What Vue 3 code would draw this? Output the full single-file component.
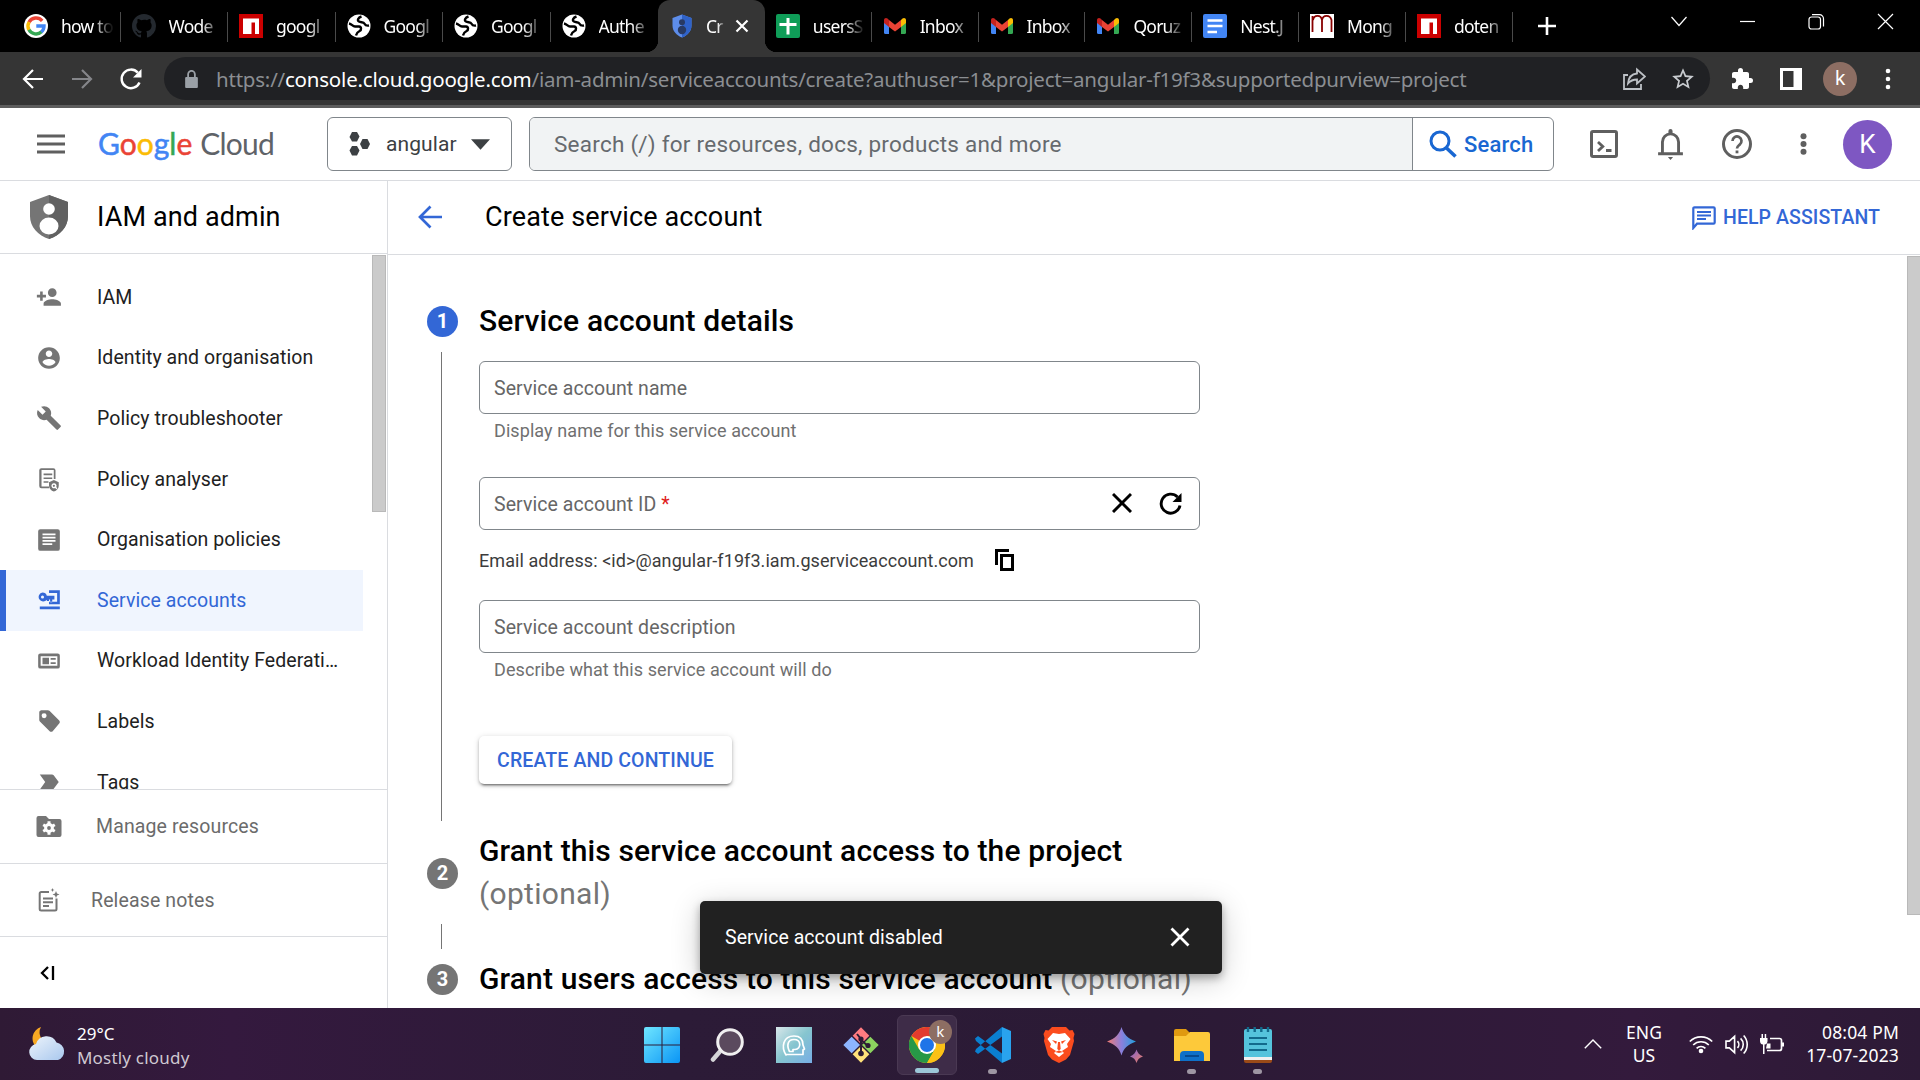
<script setup>
const tabs = [
  { icon: 'google', title: 'how to' },
  { icon: 'github', title: 'Wode' },
  { icon: 'npm', title: 'googl' },
  { icon: 'globe', title: 'Googl' },
  { icon: 'globe', title: 'Googl' },
  { icon: 'globe', title: 'Authe', last: true },
  { icon: 'shield', title: 'Cr', active: true },
  { icon: 'sheets', title: 'usersS' },
  { icon: 'gmail', title: 'Inbox' },
  { icon: 'gmail', title: 'Inbox' },
  { icon: 'gmail', title: 'Qoruz' },
  { icon: 'docs', title: 'Nest.J' },
  { icon: 'mongoose', title: 'Mong' },
  { icon: 'npm', title: 'doten' },
]

const nav = [
  { label: 'IAM', d: 'M15 12c2.21 0 4-1.79 4-4s-1.79-4-4-4-4 1.79-4 4 1.79 4 4 4zM6.200 10V7H3.800v3H.8v2.400h3v3h2.400v-3h3V10zm8.800 4c-2.67 0-8 1.34-8 4v2h16v-2c0-2.66-5.33-4-8-4z' },
  { label: 'Identity and organisation', d: 'M12 2C6.48 2 2 6.48 2 12s4.48 10 10 10 10-4.48 10-10S17.52 2 12 2zm0 3c1.66 0 3 1.34 3 3s-1.34 3-3 3-3-1.34-3-3 1.34-3 3-3zm0 14.2c-2.5 0-4.71-1.28-6-3.22.03-1.99 4-3.08 6-3.08 1.99 0 5.97 1.09 6 3.08-1.29 1.94-3.5 3.22-6 3.22z' },
  { label: 'Policy troubleshooter', d: 'M22.7 19l-9.1-9.1c.9-2.3.4-5-1.5-6.9-2-2-5-2.4-7.4-1.3L9 6 6 9 1.6 4.700C.4 7.100.9 10.100 2.900 12.100c1.900 1.900 4.600 2.400 6.900 1.500l9.100 9.100c.4.4 1 .4 1.400 0l2.300-2.300c.5-.4.5-1.100.1-1.400z' },
  { label: 'Policy analyser', d: 'M5 2h11a2 2 0 0 1 2 2v8h-1.600V3.600H5.100v15.300H12v1.600H5a2 2 0 0 1-2-2V4a2 2 0 0 1 2-2zm2 5h8v1.500H7V7zm0 3.500h8V12H7v-1.500zm0 3.500h4.500v1.500H7V14zm9.500-1l4.500 1.900v3.300c0 2.500-1.900 4.600-4.500 5.300-2.600-.7-4.500-2.800-4.500-5.300v-3.300l4.500-1.900zm0 3a2.300 2.300 0 1 0 1.200 4.300l1.100 1.100.9-.9-1-1.100a2.300 2.300 0 0 0-2.200-3.400zm0 1.300a1 1 0 1 1 0 2 1 1 0 0 1 0-2z' },
  { label: 'Organisation policies', d: 'M4 2h16a2 2 0 0 1 2 2v16a2 2 0 0 1-2 2H4a2 2 0 0 1-2-2V4a2 2 0 0 1 2-2zm2 4v1.500h12V6H6zm0 3v1.500h12V9H6zm0 3v1.500h12V12H6zm0 3v1.500h9V15H6z' },
  { label: 'Service accounts', active: true, d: 'M6 5a4.200 4.200 0 0 1 4 3h7v3.500h-2V14h-2v-2.500h-1V13h-2v-1.300A4.200 4.200 0 1 1 6 5zm0 2.900a1.400 1.400 0 1 0 0 2.800 1.400 1.400 0 0 0 0-2.800zM12 3h10v13H12v-2.500h7.500v-8H12V3zM3.500 18H22v2.600H3.500V18z' },
  { label: 'Workload Identity Federation', d: 'M4 5h16a2 2 0 0 1 2 2v10a2 2 0 0 1-2 2H4a2 2 0 0 1-2-2V7a2 2 0 0 1 2-2zm.3 2.600v8.800h15.400V7.600H4.300zM6 9h6v6H6V9zm7.500.2h4.700v1.700h-4.700V9.200zm0 3.900h4.700v1.700h-4.700v-1.700z' },
  { label: 'Labels', d: 'M21.410 11.580l-9-9C12.050 2.220 11.550 2 11 2H5c-1.100 0-2 .9-2 2v7c0 .55.22 1.050.590 1.420l9 9c.360.360.860.580 1.410.580s1.050-.22 1.410-.590l6-7c.370-.360.590-.860.590-1.410s-.23-1.060-.590-1.420zM7.500 9.500A2.300 2.300 0 1 1 7.500 4.900a2.300 2.300 0 0 1 0 4.600z' },
  { label: 'Tags', d: 'M3.500 19h11.200c.65 0 1.260-.31 1.630-.84L21 12l-4.670-6.160A2 2 0 0 0 14.700 5H3.500l5 7-5 7z' },
]
</script>

<template>
  <div class="screen">
    <!-- Browser tab strip -->
    <div class="tabstrip">
      <div v-for="(t, i) in tabs" :key="i" class="tab" :class="{ active: t.active, last: t.last, narrow: i > 5 }">
        <svg v-if="t.icon === 'google'" class="fav" viewBox="0 0 24 24">
          <circle cx="12" cy="12" r="12" fill="#fff" />
          <g fill="none" stroke-width="3.400">
            <path d="M18.200 6.800A8 8 0 0 0 5 8.200" stroke="#ea4335" />
            <path d="M5.100 8A8 8 0 0 0 5.100 16" stroke="#fbbc05" />
            <path d="M5 15.800A8 8 0 0 0 17.500 17.800" stroke="#34a853" />
            <path d="M17.300 18A8 8 0 0 0 20 12H12.300" stroke="#4285f4" />
          </g>
        </svg>
        <svg v-else-if="t.icon === 'github'" class="fav" viewBox="0 0 16 16">
          <path fill="#24292f" d="M8 0C3.580 0 0 3.580 0 8c0 3.540 2.290 6.530 5.470 7.590.4.070.55-.17.55-.38 0-.19-.01-.82-.01-1.490-2.010.37-2.530-.49-2.690-.94-.09-.23-.48-.94-.82-1.130-.28-.15-.68-.52-.01-.53.63-.01 1.080.58 1.230.82.72 1.210 1.870.87 2.330.66.070-.52.28-.87.510-1.070-1.780-.2-3.640-.89-3.640-3.950 0-.87.310-1.590.82-2.150-.08-.2-.36-1.020.080-2.120 0 0 .67-.21 2.200.82A7.600 7.600 0 0 1 8 3.860c.68 0 1.360.09 2 .27 1.530-1.040 2.200-.82 2.200-.82.440 1.100.16 1.920.080 2.120.510.560.820 1.270.820 2.150 0 3.070-1.870 3.750-3.650 3.950.290.250.540.730.540 1.480 0 1.070-.01 1.930-.01 2.200 0 .210.150.460.550.380A8 8 0 0 0 16 8c0-4.420-3.580-8-8-8z" />
        </svg>
        <svg v-else-if="t.icon === 'npm'" class="fav" viewBox="0 0 24 24">
          <path fill="#cb0000" d="M0 0h24v24H0z" />
          <path fill="#fff" d="M4 4.500h16v15.500h-4V8.500h-3.500V20H4z" />
        </svg>
        <svg v-else-if="t.icon === 'globe'" class="fav" viewBox="0 0 24 24">
          <circle cx="12" cy="12" r="11.500" fill="#fff" />
          <g fill="none" stroke="#000" stroke-width="2.400">
            <path d="M2 9.500c3 .5 3.500 3 6 3h4c2.600.3 2.600 3.500.6 4.500-1.800.9-3 1.500-3.600 4.500" />
            <path d="M14.500 2.500c-3.500 1.200-4.500 3.700-2.500 5 2 1.200 4.500.2 5.500 2.200.8 1.600 2 2.300 4.500 1.800" />
          </g>
        </svg>
        <svg v-else-if="t.icon === 'shield'" class="fav" viewBox="0 0 24 24">
          <path fill="#5d8dea" d="M12 .5L2.500 4v7.500c0 5.500 4 10 9.500 12 5.500-2 9.500-6.500 9.500-12V4z" />
          <path fill="#2f62c8" d="M12 .5L21.500 4v7.500c0 5.500-4 10-9.500 12z" />
          <circle cx="12" cy="8.200" r="3" fill="#283a63" />
          <circle cx="12" cy="16" r="4.200" fill="#283a63" />
        </svg>
        <svg v-else-if="t.icon === 'sheets'" class="fav" viewBox="0 0 24 24">
          <rect width="24" height="24" rx="2" fill="#0f9d58" />
          <path d="M3.500 10.500h17M12 4v16.500" stroke="#fff" stroke-width="3" />
        </svg>
        <svg v-else-if="t.icon === 'gmail'" class="fav" viewBox="0 0 24 24">
          <path fill="#4285f4" d="M1 8l5 3.500V20H2.500A1.500 1.500 0 0 1 1 18.500z" />
          <path fill="#34a853" d="M23 8l-5 3.500V20h3.500a1.500 1.500 0 0 0 1.500-1.500z" />
          <path fill="#fbbc04" d="M18 6l1.500-1.500C21 3.300 23 4.200 23 6v3l-5 4z" />
          <path fill="#ea4335" d="M6 6l6 4.800L18 6v7l-6 4.500L6 13z" />
          <path fill="#c5221f" d="M1 6c0-1.800 2-2.700 3.500-1.500L6 6v7L1 9z" />
        </svg>
        <svg v-else-if="t.icon === 'docs'" class="fav" viewBox="0 0 24 24">
          <rect width="24" height="24" rx="2" fill="#4285f4" />
          <path d="M4.500 6.500h15M4.500 12h15M4.500 18h9.500" stroke="#fff" stroke-width="2.600" />
        </svg>
        <svg v-else class="fav" viewBox="0 0 24 24">
          <path fill="#fff" d="M0 0h24v24H0z" />
          <path d="M2.500 18V2M3 6c1-5.500 8-5.500 9 0v12M12 6c1-5.500 8-5.500 9.500 0v12" fill="none" stroke="#800" stroke-width="1.800" />
        </svg>
        <span class="tab-title">{{ t.title }}</span>
        <svg v-if="t.active" class="tab-x" viewBox="0 0 14 14"><path d="M1.500 1.500l11 11M12.500 1.500l-11 11" stroke="#fff" stroke-width="2.200" /></svg>
      </div>
      <svg class="plus" viewBox="0 0 18 18"><path d="M9 0v18M0 9h18" stroke="#fff" stroke-width="2.600" /></svg>
      <div class="winctl">
        <svg width="18" height="18" viewBox="0 0 18 18"><path d="M1.500 4L9 12.500 16.500 4" /></svg>
        <svg width="18" height="18" viewBox="0 0 18 18"><path d="M1 8.500h15" /></svg>
        <svg width="18" height="18" viewBox="0 0 18 18"><rect x="1" y="4" width="11.500" height="12" rx="2.500" /><path d="M4 1.700h7.500a4 4 0 0 1 4 4V13.500" /></svg>
        <svg width="18" height="18" viewBox="0 0 18 18"><path d="M1 1l15 15M16 1L1 16" /></svg>
      </div>
    </div>

    <!-- Browser toolbar -->
    <div class="toolbar">
      <svg class="tb back" viewBox="0 0 24 24"><path d="M22 12H3.500M12 3l-9 9 9 9" stroke="#fff" /></svg>
      <svg class="tb fwd" viewBox="0 0 24 24"><path d="M2 12h18.500M12 3l9 9-9 9" stroke="#85868a" /></svg>
      <svg class="tb reload" viewBox="0 0 24 24"><path d="M20.500 15.500A9.300 9.300 0 1 1 18.800 5.600" stroke="#fff" stroke-width="2.400" /><path d="M22.500 2v8.500H14z" fill="#fff" stroke="none" /></svg>
      <div class="omnibox">
        <svg class="lock" viewBox="0 0 12 17"><path d="M1 6.500h10a1 1 0 0 1 1 1V16a1 1 0 0 1-1 1H1a1 1 0 0 1-1-1V7.500a1 1 0 0 1 1-1z" fill="#9aa0a6" /><path d="M2.800 7V4a3.200 3.200 0 0 1 6.400 0v3" fill="none" stroke="#9aa0a6" stroke-width="1.700" /></svg>
        <span class="url">https://<b>console.cloud.google.com</b>/iam-admin/serviceaccounts/create?authuser=1&amp;project=angular-f19f3&amp;supportedpurview=project</span>
        <svg class="share" viewBox="0 0 24 24" fill="none" stroke="#bdc1c6" stroke-width="1.800"><path d="M6 8H2v14h17v-5" /><path d="M15 2.500l8 7-8 7v-4c-4 0-6.500 1-9 4 .5-5.500 3.500-9.500 9-10z" /></svg>
        <svg class="star" viewBox="0 0 24 24"><path fill="#c9ccd0" d="M22 9.240l-7.190-.62L12 2 9.190 8.630 2 9.240l5.460 4.730L5.820 21 12 17.270 18.180 21l-1.630-7.030L22 9.240zM12 15.400l-3.760 2.270 1-4.280-3.320-2.880 4.380-.38L12 6.100l1.710 4.040 4.380.380-3.320 2.880 1 4.280L12 15.400z" /></svg>
      </div>
      <svg class="puzzle" viewBox="0 0 24 24"><path fill="#fff" d="M20.500 11H19V7c0-1.100-.9-2-2-2h-4V3.500a2.500 2.500 0 0 0-5 0V5H4c-1.100 0-1.990.9-1.990 2v3.800H3.500c1.490 0 2.700 1.210 2.700 2.700s-1.210 2.700-2.700 2.700H2V20c0 1.100.9 2 2 2h3.800v-1.500c0-1.490 1.210-2.700 2.700-2.700s2.700 1.210 2.700 2.700V22H17c1.100 0 2-.9 2-2v-4h1.500a2.500 2.500 0 0 0 0-5z" /></svg>
      <svg class="panel" viewBox="0 0 22 22"><path fill="#fff" fill-rule="evenodd" d="M0 0h22v22H0zM3 3v16h10.500V3z" /></svg>
      <div class="profile">k</div>
      <svg class="kebab" viewBox="0 0 6 22"><g fill="#fff"><circle cx="3" cy="3" r="2.300" /><circle cx="3" cy="11" r="2.300" /><circle cx="3" cy="19" r="2.300" /></g></svg>
    </div>

    <!-- Console header -->
    <header class="gc-head">
      <svg class="burger" viewBox="0 0 28 20"><path d="M0 2h28M0 10h28M0 18h28" stroke="#5f5f5f" stroke-width="2.800" /></svg>
      <div class="logo"><i class="b">G</i><i class="r">o</i><i class="y">o</i><i class="b">g</i><i class="g">l</i><i class="r">e</i><span>Cloud</span></div>
      <div class="project">
        <svg width="22" height="24" viewBox="0 0 22 24" fill="#3c4043"><path d="M3 0h5l2.500 4.500L8 9.500H3L.5 5z" /><path d="M3 14h5l2.500 4.500L8 23.500H3L.5 18.500z" /><path d="M13.500 7h5l2.500 5-2.500 5h-5L11 12z" /></svg>
        <span>angular</span>
        <svg width="19" height="11" viewBox="0 0 20 11"><path d="M0 0h20L10 11z" fill="#3c4043" /></svg>
      </div>
      <div class="search">
        <div class="search-input">Search (/) for resources, docs, products and more</div>
        <div class="search-btn">
          <svg width="28" height="28" viewBox="0 0 28 28" fill="none" stroke="#1967d2"><circle cx="11" cy="11" r="9" stroke-width="3" /><path d="M17 17.500l9.500 9" stroke-width="3.600" /></svg>
          <span>Search</span>
        </div>
      </div>
      <svg class="h-shell" viewBox="0 0 28 28" fill="none" stroke="#5f5f5f"><rect x="1.500" y="1.500" width="25" height="25" rx="1.500" stroke-width="3" /><path d="M8 12l4.800 4.500L8 21M16 20.500h5.500" stroke-width="2.800" /></svg>
      <svg class="h-bell" viewBox="0 0 24 30"><path fill="none" stroke="#5f5f5f" stroke-width="2.800" d="M4.200 24V12.500a7.800 7.800 0 0 1 15.600 0V24" /><path fill="#5f5f5f" d="M0 22.500h24v3H0zM9.500 27h5l-2.500 3zM10 4V2a2 2 0 0 1 4 0v2z" /></svg>
      <svg class="h-help" viewBox="0 0 30 30"><circle cx="15" cy="15" r="13.500" fill="none" stroke="#5f5f5f" stroke-width="3" /><path d="M10.500 12a4.500 4.500 0 1 1 7.200 3.600C16 17 15 17.600 15 19.500" fill="none" stroke="#5f5f5f" stroke-width="2.700" /><path d="M13.600 21.500h2.800v2.800h-2.800z" fill="#5f5f5f" /></svg>
      <svg class="h-dots" viewBox="0 0 6 22"><g fill="#5f5f5f"><circle cx="3" cy="3.200" r="3" /><circle cx="3" cy="11" r="3" /><circle cx="3" cy="18.800" r="3" /></g></svg>
      <div class="avatar">K</div>
    </header>

    <div class="body">
      <aside class="side">
        <div class="side-head">
          <svg width="38" height="44" viewBox="0 0 38 44"><path fill="#757575" d="M19 0L0 7v14c0 11 8 19.500 19 23 11-3.500 19-12 19-23V7z" /><path fill="#616161" d="M19 0l19 7v14c0 11-8 19.500-19 23z" /><circle cx="19" cy="14" r="5.800" fill="#fff" /><ellipse cx="19" cy="31" rx="9.500" ry="8.500" fill="#fff" /></svg>
          <h2>IAM and admin</h2>
        </div>
        <div class="side-list">
          <nav>
            <div v-for="n in nav" :key="n.label" class="item" :class="{ on: n.active }">
              <svg class="ic" viewBox="0 0 24 24"><path fill="currentColor" fill-rule="evenodd" :d="n.d" /></svg>
              <span>{{ n.label }}</span>
            </div>
          </nav>
          <div class="side-thumb"></div>
        </div>
        <div class="foot manage">
          <svg width="26" height="24" viewBox="0 0 26 24"><path fill="#757575" d="M2.500 1H10l3 3h10.500A2 2 0 0 1 25.500 6v14a2 2 0 0 1-2 2h-21a2 2 0 0 1-2-2V3a2 2 0 0 1 2-2z" /><circle cx="13" cy="13" r="3.400" fill="none" stroke="#fff" stroke-width="3" /><path d="M13 6.300v3M13 16.700v3M7.200 9.700l2.600 1.500M16.200 14.800l2.600 1.500M7.200 16.300l2.600-1.500M16.200 11.200l2.600-1.500" stroke="#fff" stroke-width="3" /></svg>
          <span>Manage resources</span>
        </div>
        <div class="foot release">
          <svg width="22" height="24" viewBox="0 0 22 24"><path fill="none" stroke="#757575" stroke-width="2" d="M11 4H3.200A1.500 1.500 0 0 0 1.700 5.500V21a1.500 1.500 0 0 0 1.500 1.500H17a1.500 1.500 0 0 0 1.500-1.500V10.500" /><path d="M5 10.500h10M5 14.200h10M5 18h6" stroke="#757575" stroke-width="1.900" /><path fill="#757575" d="M18 3l1 2.500 2.500 1-2.500 1-1 2.500-1-2.500-2.500-1 2.500-1zM14.500 0l.6 1.400 1.400.6-1.400.6-.6 1.400-.6-1.400-1.400-.6 1.400-.6z" /></svg>
          <span>Release notes</span>
        </div>
        <div class="foot collapse">
          <svg width="15" height="14" viewBox="0 0 15 14"><path d="M8 1L2 7l6 6M13 0v14" fill="none" stroke="#000" stroke-width="2.300" /></svg>
        </div>
      </aside>

      <main class="main">
        <div class="main-head">
          <svg width="24" height="24" viewBox="0 0 24 24" fill="none" stroke="#3367d6" stroke-width="2.700"><path d="M24 12H2.500M12.500 1.500L2 12l10.500 10.500" /></svg>
          <h1>Create service account</h1>
          <div class="assist">
            <svg width="24" height="24" viewBox="0 0 24 24"><path fill="none" stroke="#3367d6" stroke-width="2.200" d="M1.300 22V2.500A1.200 1.200 0 0 1 2.500 1.300h19a1.200 1.200 0 0 1 1.200 1.200v14a1.200 1.200 0 0 1-1.200 1.200H5z" /><path d="M5 6h14M5 9.500h14M5 13h9" stroke="#3367d6" stroke-width="1.900" /></svg>
            <span>HELP ASSISTANT</span>
          </div>
        </div>

        <div class="content">
          <div class="steps">
            <div class="rail">
              <div class="num blue">1</div>
              <div class="line l1"></div>
              <div class="num n2">2</div>
              <div class="line l2"></div>
              <div class="num n3">3</div>
            </div>
            <div class="form">
              <h3 class="t1">Service account details</h3>
              <div class="field">Service account name</div>
              <div class="hint">Display name for this service account</div>
              <div class="field f2">
                <span>Service account ID <em>*</em></span>
                <div class="acts">
                  <svg width="20" height="20" viewBox="0 0 20 20"><path d="M1 1l18 18M19 1L1 19" stroke="#000" stroke-width="2.900" /></svg>
                  <svg width="23" height="23" viewBox="0 0 23 23"><path d="M21 13.500A9.500 9.500 0 1 1 18.500 5" fill="none" stroke="#000" stroke-width="2.900" /><path d="M22.500 1v9H13.500z" /></svg>
                </div>
              </div>
              <div class="email">
                <span>Email address: &lt;id&gt;@angular-f19f3.iam.gserviceaccount.com</span>
                <svg width="19" height="22" viewBox="0 0 19 22" fill="none" stroke="#000" stroke-width="3"><path d="M1.500 16V1.500H14" /><rect x="6.500" y="6.500" width="11" height="14" /></svg>
              </div>
              <div class="field f3">Service account description</div>
              <div class="hint">Describe what this service account will do</div>
              <button class="cta">CREATE AND CONTINUE</button>
              <h3 class="t2">Grant this service account access to the project<br /><small>(optional)</small></h3>
              <h3 class="t3">Grant users access to this service account <small>(optional)</small></h3>
            </div>
          </div>
          <div class="main-thumb"></div>
        </div>

        <div class="snack">
          <span>Service account disabled</span>
          <svg width="20" height="20" viewBox="0 0 20 20"><path d="M1.500 1.500l17 17M18.500 1.500l-17 17" stroke="#fff" stroke-width="2.800" /></svg>
        </div>
      </main>
    </div>

    <!-- Windows taskbar -->
    <footer class="taskbar">
      <div class="weather">
        <svg width="40" height="38" viewBox="0 0 40 38">
          <defs><linearGradient id="cloud" x1="0" y1="0" x2="1" y2="1"><stop offset="0" stop-color="#eef4fb" /><stop offset="1" stop-color="#a9c8ee" /></linearGradient></defs>
          <path d="M13 2a12 12 0 1 0 15 15A11 11 0 0 1 13 2z" fill="#f7a823" />
          <path d="M9 35a8 8 0 0 1-1-15.900 11 11 0 0 1 20.500-1.500A9 9 0 0 1 30 35z" fill="url(#cloud)" />
        </svg>
        <div class="wtext"><div>29°C</div><div class="sub">Mostly cloudy</div></div>
      </div>

      <div class="apps">
        <div class="app">
          <svg viewBox="0 0 36 36"><defs><linearGradient id="win" x1="0" y1="0" x2="1" y2="1"><stop offset="0" stop-color="#6fe6ff" /><stop offset="1" stop-color="#0a95f5" /></linearGradient></defs><path fill="url(#win)" d="M2 0h15.500v17.500H0V2a2 2 0 0 1 2-2zM18.500 0H34a2 2 0 0 1 2 2v15.500H18.500zM0 18.500h17.500V36H2a2 2 0 0 1-2-2zM18.500 18.500H36V34a2 2 0 0 1-2 2H18.500z" /></svg>
        </div>
        <div class="app">
          <svg viewBox="0 0 36 36"><path d="M9.500 25L3 32.500" stroke="#d5d5d8" stroke-width="4.500" stroke-linecap="round" /><circle cx="20" cy="15" r="12.300" fill="#5b4a5e" stroke="#f0eff0" stroke-width="3" /></svg>
        </div>
        <div class="app">
          <svg viewBox="0 0 36 36"><defs><linearGradient id="alx" x1="0" y1="0" x2="1" y2="1"><stop offset="0" stop-color="#d9e7ea" /><stop offset=".5" stop-color="#86c5cf" /><stop offset="1" stop-color="#77aee6" /></linearGradient></defs><path d="M0 0h36v36H0z" fill="url(#alx)" /><g fill="none" stroke="#fff" stroke-width="1.700" stroke-linejoin="round"><path d="M10 28c-5-8-3-19 8-19 6 0 9 3.500 9 9l1.500 4-1.500 1v4.500H10z" /><path d="M13.500 24.500c-3-6-2-12 4.500-12 7.500 0 7.500 9.500 1 10h-2v2z" /></g></svg>
        </div>
        <div class="app">
          <svg viewBox="0 0 36 36"><g transform="rotate(45 18 18)"><path fill="#8db5ff" d="M5.500 18.700h11.800v11.800H5.500z" /><path fill="#ff7b80" d="M5.500 5.500h11.800v11.800H5.500z" /><path fill="#8cd35f" d="M18.700 5.500h11.800v11.800H18.700z" /><path fill="#ffe27a" d="M18.700 18.700h11.800v11.800H18.700z" /></g><path d="M14 7l4 5v15M18 13l7 6" stroke="#2c1c35" stroke-width="2" fill="none" /><g fill="#2c1c35"><circle cx="18" cy="12" r="2.600" /><circle cx="25" cy="18.500" r="2.600" /><circle cx="18" cy="26.500" r="2.800" /></g></svg>
        </div>
        <div class="app current">
          <svg viewBox="0 0 36 36"><circle cx="18" cy="18" r="18" fill="#fbc116" /><path fill="#e33b2e" d="M18 18L2.400 9A18 18 0 0 1 33.600 9H18z" /><path fill="#279847" d="M2.400 9A18 18 0 0 0 18 36l7.800-13.500L18 18l-7.800 4.500z" /><path fill="#fbc116" d="M33.600 9A18 18 0 0 1 18 36l7.800-13.500A9 9 0 0 0 18 9z" /><circle cx="18" cy="18" r="9" fill="#fff" /><circle cx="18" cy="18" r="7" fill="#1f74e8" /></svg>
          <div class="kbadge">k</div>
          <div class="bar"></div>
        </div>
        <div class="app">
          <svg viewBox="0 0 36 36"><path fill="#0a7fd0" d="M0 11.500l3-2.500L27 26.500V36L1 14zM0 24.500L3 27l24-17.500V0L1 22z" /><path fill="#29a3ee" d="M27 0l9 4v28l-9 4z" /></svg>
          <div class="dot"></div>
        </div>
        <div class="app">
          <svg viewBox="0 0 36 36"><path fill="#fb4c1e" d="M11 0h14l3.500 3.500L31.500 3l2 4-1 4 .5 3-4 14-4 4.500-7 3.500-7-3.500L7 28 3 14l.5-3-1-4 2-4 3 .5z" /><path fill="#fff" d="M12 6l6 1 6-1 5.500 6-3.500 5 1 3-6 4 2 2-5 4-5-4 2-2-6-4 1-3-3.500-5z" /><path fill="#fb4c1e" d="M11 13l5 1.500-1 2.500zM25 13l-5 1.500 1 2.500zM17 15h2l.7 7-1.700 1.500-1.700-1.500zM14 25l4-1.500 4 1.500-4 1z" /></svg>
        </div>
        <div class="app">
          <svg viewBox="0 0 36 36"><defs><linearGradient id="spark" x1="0" y1="0" x2="1" y2="0"><stop offset="0" stop-color="#f07a72" /><stop offset=".5" stop-color="#8b7fdc" /><stop offset="1" stop-color="#1fa0dc" /></linearGradient><linearGradient id="spark2" x1="0" y1="0" x2="1" y2="1"><stop offset="0" stop-color="#7d62d8" /><stop offset="1" stop-color="#f08060" /></linearGradient></defs><path fill="url(#spark)" d="M14.500 0c2 7 6 11.500 14.500 14.500C20.500 17.500 16.500 21.500 14.500 28.500 12.500 21.500 8.500 17.500 0 14.500 8.500 11.500 12.500 7 14.500 0z" /><path fill="url(#spark2)" d="M29.500 22.500c1 3.500 3 5.500 6.500 7-3.500 1-5.500 3-6.500 6.500-1-3.500-3-5.500-6.500-6.500 3.500-1.500 5.500-3.500 6.500-7z" /></svg>
        </div>
        <div class="app">
          <svg viewBox="0 0 36 36"><path fill="#e09a10" d="M2 2h10l4 4-3 6H0V4a2 2 0 0 1 2-2z" /><path fill="#fdc93a" d="M0 9h12l4-4h18a2 2 0 0 1 2 2v27H0z" /><path fill="#0f70c8" d="M10 24h16a4 4 0 0 1 4 4v6H6v-6a4 4 0 0 1 4-4z" /><path d="M11 29h14" stroke="#064a90" stroke-width="2" /></svg>
          <div class="dot"></div>
        </div>
        <div class="app">
          <svg viewBox="0 0 36 36"><path fill="#9a4a18" d="M4 30h28v4a2 2 0 0 1-2 2H6a2 2 0 0 1-2-2z" /><path fill="#f0f0f0" d="M4 28h28v5H4z" /><path fill="#55c3dc" d="M4 4a2 2 0 0 1 2-2h24a2 2 0 0 1 2 2v26H4z" /><path d="M9 11h18M9 17h18M9 23h18" stroke="#126a8c" stroke-width="2" /><path d="M8 0v5M14.700 0v5M21.300 0v5M28 0v5" stroke="#126a8c" stroke-width="2.400" /></svg>
          <div class="dot"></div>
        </div>
      </div>

      <div class="tray">
        <svg class="chev" viewBox="0 0 18 10"><path d="M.8 9.200L9 1l8.200 8.200" fill="none" stroke="#fff" stroke-width="1.400" /></svg>
        <div class="lang">ENG<br />US</div>
        <svg class="wifi" viewBox="0 0 24 20"><g fill="none" stroke="#fff" stroke-width="1.700"><path d="M.8 7.500a15.700 15.700 0 0 1 22.400 0M4.200 11a11 11 0 0 1 15.600 0M7.600 14.300a6.300 6.300 0 0 1 8.800 0" /></g><circle cx="12" cy="17" r="2.300" fill="#fff" /></svg>
        <svg class="vol" viewBox="0 0 24 22"><g fill="none" stroke="#fff" stroke-width="1.700"><path d="M1 7.500h3.500L10 2.500v17l-5.500-5H1zM13 7.500a5 5 0 0 1 0 7M16.300 4.500a9 9 0 0 1 0 13M19.500 1.500a14 14 0 0 1 0 19" /></g></svg>
        <svg class="bat" viewBox="0 0 24 20"><path d="M10 4.500h9.500a2 2 0 0 1 2 2v8a2 2 0 0 1-2 2H7" fill="none" stroke="#fff" stroke-width="1.700" /><path fill="#fff" d="M22 8.500h2v4h-2zM7 9.500h3.500v5H6zM0 4h7.500v3a3.700 3.700 0 0 1-3 3.600V20H3v-9.400A3.700 3.700 0 0 1 0 7zM1.500 0H3v4H1.500zM4.700 0h1.500v4H4.700z" /></svg>
        <div class="clock">08:04 PM<br />17-07-2023</div>
      </div>
    </footer>
  </div>
</template>

<style>
html, body { margin: 0; overflow: hidden; background: #fff; }
</style>

<style scoped>
* { box-sizing: border-box; }
svg { flex: none; display: block; }
.screen { width: 1920px; height: 1080px; display: flex; flex-direction: column; overflow: hidden; font-family: Roboto, sans-serif; color: #000; background: #fff; }

.tabstrip { height: 52px; flex: none; background: #000; display: flex; align-items: center; padding-left: 13px; font-family: "Noto Sans", "Open Sans", sans-serif; }
.tab { width: 107.500px; height: 52px; flex: none; display: flex; align-items: center; padding-left: 11px; position: relative; }
.tab.narrow { width: 106.850px; }
.tab::after { content: ""; position: absolute; right: 0; top: 12px; width: 1px; height: 30px; background: #4a4a4a; }
.tab.active::after, .tab.last::after { display: none; }
.fav { width: 24px; height: 24px; }
.tab-title { margin-left: 13px; width: 52px; white-space: nowrap; color: #fff; font-size: 17.500px; letter-spacing: -0.750px; line-height: 26px; -webkit-mask-image: linear-gradient(90deg, #000 62%, rgba(0,0,0,.1) 96%); mask-image: linear-gradient(90deg, #000 62%, rgba(0,0,0,.1) 96%); }
.tab.active { background: #353535; border-radius: 12px 12px 0 0; }
.tab.active::before { content: ""; position: absolute; left: -12px; right: -12px; bottom: 0; height: 12px; background: radial-gradient(circle at 0 0, transparent 12px, #353535 12.500px) left / 12px 12px no-repeat, radial-gradient(circle at 100% 0, transparent 12px, #353535 12.500px) right / 12px 12px no-repeat; }
.tab.active .fav { margin-left: 1px; }
.tab.active .tab-title { width: 19px; margin-left: 12px; }
.tab-x { width: 14px; height: 14px; margin-left: 10px; }
.plus { width: 18px; height: 18px; margin-left: 25px; }
.winctl { display: flex; gap: 51px; margin-left: auto; margin-right: 25px; padding-bottom: 8px; }
.winctl svg { fill: none; stroke: #fff; stroke-width: 1.200; }

.toolbar { height: 56px; flex: none; background: #353535; border-bottom: 3px solid #5d5d5d; display: flex; align-items: center; padding-left: 21px; }
.tb { width: 24px; height: 24px; fill: none; stroke-width: 2.200; }
.fwd { margin-left: 25px; }
.reload { margin-left: 25px; }
.omnibox { margin-left: 21px; width: 1546px; height: 43px; border-radius: 22px; background: #202124; display: flex; align-items: center; padding-left: 21px; font-family: "Noto Sans", "Open Sans", sans-serif; }
.lock { width: 13px; height: 18px; }
.url { margin-left: 18px; width: 1300px; white-space: nowrap; font-size: 20.500px; color: #8b8e92; letter-spacing: -0.210px; }
.url b { font-weight: 400; color: #fff; }
.share { width: 24px; height: 24px; margin-left: 106px; }
.star { width: 26px; height: 26px; margin-left: 24px; }
.puzzle { width: 24px; height: 24px; margin-left: 20px; }
.panel { width: 22px; height: 22px; margin-left: 26px; }
.profile { width: 34px; height: 34px; border-radius: 50%; background: #8d6e63; color: #fff; margin-left: 21px; font: 20px/32px "Noto Sans", sans-serif; text-align: center; }
.kebab { width: 6px; height: 22px; margin-left: 28px; }

.gc-head { height: 73px; flex: none; border-bottom: 1px solid #dadce0; display: flex; align-items: center; padding-left: 37px; }
.burger { width: 28px; height: 20px; }
.logo { margin-left: 33px; width: 229px; font: 30px/40px Lato, sans-serif; letter-spacing: 0; white-space: nowrap; padding-bottom: 2px; }
.logo i { font-style: normal; -webkit-text-stroke: 0.500px currentColor; }
.logo span { color: #5f6368; margin-left: 8px; letter-spacing: -0.800px; }
.b { color: #4285f4; } .r { color: #ea4335; } .y { color: #fbbc04; } .g { color: #34a853; }
.project { width: 185px; height: 54px; border: 1px solid #80868b; border-radius: 6px; display: flex; align-items: center; padding-left: 21px; font-size: 21px; color: #3c4043; letter-spacing: 0.100px; }
.project span { margin: 0 14px 0 15px; width: 71px; }
.search { margin-left: 17px; width: 1025px; height: 54px; border: 1px solid #80868b; border-radius: 6px; display: flex; overflow: hidden; }
.search-input { width: 883px; background: #f1f3f4; border-right: 1px solid #80868b; padding-left: 24px; font-size: 22.500px; line-height: 52px; color: #666a6e; letter-spacing: 0.240px; }
.search-btn { flex: 1; display: flex; align-items: center; padding-left: 16px; gap: 7px; color: #1967d2; font-size: 22px; font-weight: 500; letter-spacing: 0.200px; }
.h-shell { width: 28px; height: 28px; margin-left: 36px; }
.h-bell { width: 25px; height: 31px; margin-left: 40px; }
.h-help { width: 30px; height: 30px; margin-left: 39px; }
.h-dots { width: 7px; height: 22px; margin-left: 48px; }
.avatar { width: 49px; height: 49px; border-radius: 50%; background: #7e57c2; color: #fff; font-size: 26px; line-height: 49px; text-align: center; margin-left: 36px; }

.body { flex: 1; min-height: 0; display: flex; }
.side { width: 388px; flex: none; border-right: 1px solid #dadce0; display: flex; flex-direction: column; }
.side-head { height: 73px; flex: none; border-bottom: 1px solid #dadce0; display: flex; align-items: center; padding-left: 30px; }
.side-head svg { margin-right: 29px; }
h1, h2, h3 { margin: 0; font-weight: 400; white-space: nowrap; }
.side-head h2, .main-head h1 { font-size: 27px; letter-spacing: 0.120px; }
.side-list { height: 535px; flex: none; display: flex; justify-content: space-between; overflow: hidden; }
nav { width: 363px; padding-top: 13px; }
.item { height: 60.600px; display: flex; align-items: center; padding-left: 36px; font-size: 19.500px; letter-spacing: 0.070px; color: #212121; }
.item span { margin-left: 35px; width: 244px; overflow: hidden; text-overflow: ellipsis; white-space: nowrap; line-height: 28px; padding-top: 1px; }
.ic { width: 26px; height: 26px; color: #757575; }
.item.on { background: #f0f5fe; border-left: 6px solid #3367d6; padding-left: 30px; color: #3367d6; }
.item.on .ic { color: #3367d6; }
.side-thumb { width: 14px; height: 257px; margin-right: 1px; margin-top: 1px; background: #cbcbcb; border: 1px solid #b9b9b9; }
.foot { flex: none; border-top: 1px solid #dadce0; display: flex; align-items: center; font-size: 19.500px; letter-spacing: 0.130px; color: #6b6b6b; }
.manage { height: 74px; padding-left: 36px; }
.manage span { margin-left: 34px; }
.release { height: 73px; padding-left: 38px; }
.release span { margin-left: 31px; }
.collapse { height: 72px; padding-left: 40px; }

.main { flex: 1; min-width: 0; display: flex; flex-direction: column; position: relative; }
.main-head { height: 74px; flex: none; border-bottom: 1px solid #dadce0; display: flex; align-items: center; padding: 0 40px 2px 30px; }
.main-head h1 { margin-left: 43px; }
.assist { margin-left: auto; display: flex; align-items: center; gap: 7px; color: #3367d6; font-size: 19.500px; font-weight: 500; letter-spacing: 0.080px; padding-top: 2px; }
.content { flex: 1; min-height: 0; display: flex; justify-content: space-between; overflow: hidden; }
.main-thumb { width: 13px; height: 659px; margin-top: 1px; background: #cbcbcb; border: 1px solid #b9b9b9; border-right: 0; }
.steps { display: flex; padding-left: 39px; }
.rail { width: 31px; flex: none; padding-top: 51px; display: flex; flex-direction: column; align-items: center; }
.num { width: 31px; height: 31px; flex: none; border-radius: 50%; background: #757575; color: #fff; font-size: 20px; font-weight: 700; line-height: 31px; text-align: center; }
.num.blue { background: #3367d6; }
.line { width: 1px; background: #757575; margin-right: 2px; flex: none; }
.l1 { height: 469px; margin-top: 15px; }
.n2 { margin-top: 37px; }
.l2 { height: 25px; margin-top: 35px; }
.n3 { margin-top: 15px; }
.form { width: 721px; margin-left: 21px; padding-top: 44px; }
h3 { font-size: 30px; font-weight: 500; line-height: 43px; letter-spacing: 0.135px; }
h3 small { font-size: 30px; font-weight: 400; color: #757575; letter-spacing: 0.300px; }
.field { height: 53px; border: 1px solid #80868b; border-radius: 6px; padding: 1px 17px 0 14px; display: flex; align-items: center; justify-content: space-between; font-size: 19.500px; letter-spacing: 0.060px; color: #666; }
.field em { font-style: normal; color: #e01b1b; }
.t1 { margin-bottom: 19px; }
.hint { padding-left: 15px; font-size: 18px; line-height: 24px; margin-top: 5px; letter-spacing: 0.080px; color: #707070; }
.f2 { margin-top: 34px; }
.acts { display: flex; gap: 27px; align-items: center; padding-bottom: 2px; }
.email { display: flex; align-items: center; gap: 21px; height: 24px; margin-top: 18px; font-size: 18px; letter-spacing: 0.075px; color: #3c3c3c; white-space: nowrap; }
.f3 { margin-top: 28px; }
.cta { display: block; width: 253px; height: 48px; margin-top: 54px; border: 0; padding: 1px 0 0; border-radius: 5px; background: #fff; color: #3367d6; font: 500 19.500px/47px Roboto, sans-serif; letter-spacing: 0.120px; white-space: nowrap; box-shadow: 0 4px 2px -3px rgba(0,0,0,.35), 0 2px 3px rgba(0,0,0,.25), 0 1px 6px rgba(0,0,0,.14); }
.t2 { margin-top: 45px; }
.t3 { margin-top: 42px; }

.snack { position: absolute; left: 312px; top: 720px; width: 522px; height: 73px; border-radius: 5px; background: #212121; color: #fff; display: flex; align-items: center; justify-content: space-between; padding: 0 32px 1px 25px; font-size: 19.500px; letter-spacing: 0.050px; box-shadow: 0 4px 8px rgba(0,0,0,.3), 0 6px 30px rgba(0,0,0,.2); }

.taskbar { height: 72px; flex: none; background: linear-gradient(90deg, #2f1a35, #34193e 12%, #2c1b37 35%, #2b1a35 60%, #331a3c 85%, #2d1a36); color: #fff; font-family: "Noto Sans", "Open Sans", sans-serif; display: flex; align-items: center; }
.weather { width: 632px; flex: none; display: flex; align-items: center; padding-left: 28px; }
.wtext { margin-left: 9px; font-size: 17px; line-height: 24px; padding-top: 3px; }
.sub { color: #cfc8d2; letter-spacing: 0.200px; }
.apps { display: flex; gap: 6.200px; width: 700px; flex: none; align-items: center; }
.app { width: 60px; height: 60px; flex: none; display: flex; align-items: center; justify-content: center; position: relative; padding-top: 1px; border-radius: 6px; }
.app svg { width: 36px; height: 36px; }
.current { background: #3e2c48; border: 1px solid #4a3953; margin-top: 2px; padding-top: 0; }
.current svg { margin-top: -1px; }
.kbadge { position: absolute; right: 4px; top: 4px; width: 23px; height: 24px; border-radius: 50%; background: #8d6e63; font-size: 15px; line-height: 22px; text-align: center; }
.bar, .dot { position: absolute; bottom: 1px; height: 5px; border-radius: 3px; }
.bar { width: 24px; background: #9cc7d8; }
.dot { width: 9px; background: #9e96a3; bottom: 0; }
.tray { flex: 1; display: flex; align-items: center; padding-right: 21px; font-size: 17.500px; line-height: 23px; }
.chev { width: 18px; height: 10px; margin-left: 252px; }
.lang { width: 50px; margin-left: 17px; text-align: center; }
.wifi { width: 24px; height: 20px; margin-left: 20px; }
.vol { width: 25px; height: 21px; margin-left: 11px; }
.bat { width: 24px; height: 20px; margin-left: 11px; }
.clock { margin-left: auto; text-align: right; white-space: nowrap; letter-spacing: 0.150px; }
</style>
